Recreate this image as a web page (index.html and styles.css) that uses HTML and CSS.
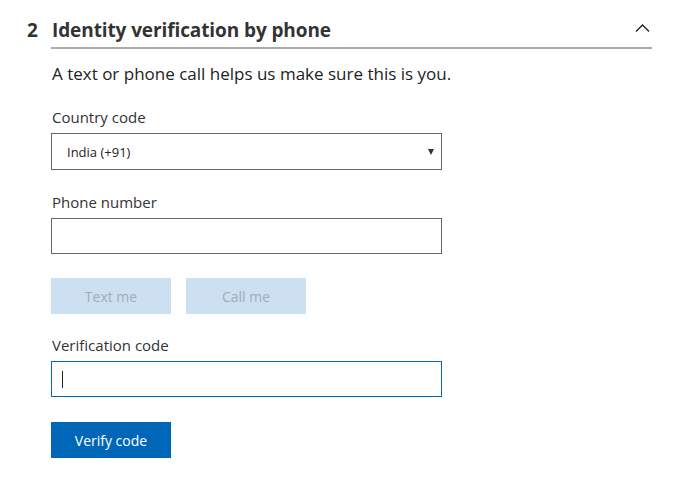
FILE: index.html
```html
<!DOCTYPE html>
<html lang="en">
<head>
<meta charset="utf-8">
<title>Identity verification by phone</title>
<link rel="stylesheet" href="styles.css">
</head>
<body>
<section class="step">
  <div class="step-num">2</div>
  <div class="step-body">
    <div class="step-head">
      <h2 class="step-title">Identity verification by phone</h2>
      <svg class="chevron" width="16" height="10" viewBox="0 0 16 10" aria-hidden="true"><polyline points="1,8.5 7.5,2 14,8.5" fill="none" stroke="#222" stroke-width="1.4"/></svg>
    </div>
    <p class="desc">A text or phone call helps us make sure this is you.</p>

    <div class="field field-first">
      <label class="label">Country code</label>
      <div class="select">
        <span class="select-text">India (+91)</span>
        <span class="select-arrow"></span>
      </div>
    </div>

    <div class="field field-phone">
      <label class="label">Phone number</label>
      <div class="input"></div>
    </div>

    <div class="buttons">
      <button class="btn btn-disabled">Text me</button>
      <button class="btn btn-disabled">Call me</button>
    </div>

    <div class="field">
      <label class="label">Verification code</label>
      <div class="input input-focus"><span class="caret"></span></div>
    </div>

    <button class="btn btn-primary">Verify code</button>
  </div>
</section>
</body>
</html>
```

FILE: styles.css
```css
html, body {
  margin: 0;
  padding: 0;
  background: #fff;
}
body {
  font-family: "Open Sans", "Noto Sans", sans-serif;
  color: #333;
}
.step {
  display: flex;
  padding-top: 16px;
}
.step-num {
  padding-left: 27px;
  box-sizing: border-box;
  width: 51px;
  font-size: 19px;
  font-weight: 700;
  line-height: 28px;
  color: #333;
}
.step-body {
  width: 601px;
}
.step-head {
  display: flex;
  align-items: center;
  justify-content: space-between;
  border-bottom: 2px solid #aaa;
  padding-bottom: 3px;
  padding-left: 1px;
}
.step-title {
  margin: 0;
  font-size: 19px;
  font-weight: 700;
  line-height: 28px;
  color: #333;
  letter-spacing: -0.1px;
}
.chevron {
  margin-right: 1px;
  margin-top: -4px;
}
.desc {
  margin: 13px 0 0 1px;
  font-size: 17px;
  line-height: 24px;
  color: #222;
}
.field {
  margin-top: 21px;
  width: 391px;
}
.field-phone {
  margin-top: 22px;
}
.label {
  display: block;
  font-size: 15px;
  line-height: 20px;
  color: #333;
  margin-bottom: 6px;
  padding-left: 1px;
}
.select {
  height: 37px;
  box-sizing: border-box;
  border: 1px solid #666;
  display: flex;
  align-items: center;
  justify-content: space-between;
  padding: 0 7px 0 15px;
}
.select-text {
  font-size: 13px;
  color: #222;
}
.select-arrow {
  width: 0;
  height: 0;
  border-left: 3.5px solid transparent;
  border-right: 3.5px solid transparent;
  border-top: 6px solid #333;
}
.input {
  height: 36px;
  box-sizing: border-box;
  border: 1px solid #666;
  display: flex;
  align-items: center;
  padding-left: 10px;
}
.input-focus {
  border-color: #0067b8;
}
.caret {
  width: 1px;
  height: 17px;
  background: #222;
}
.buttons {
  display: flex;
  gap: 15px;
  margin-top: 24px;
}
.btn {
  width: 120px;
  height: 36px;
  border: 0;
  margin: 0;
  padding: 0;
  font-family: inherit;
  font-size: 14px;
}
.btn-disabled {
  background: #cce0f2;
  color: #a3acb5;
}
.btn-primary {
  display: block;
  margin-top: 25px;
  background: #0067b8;
  color: #fff;
}
```
